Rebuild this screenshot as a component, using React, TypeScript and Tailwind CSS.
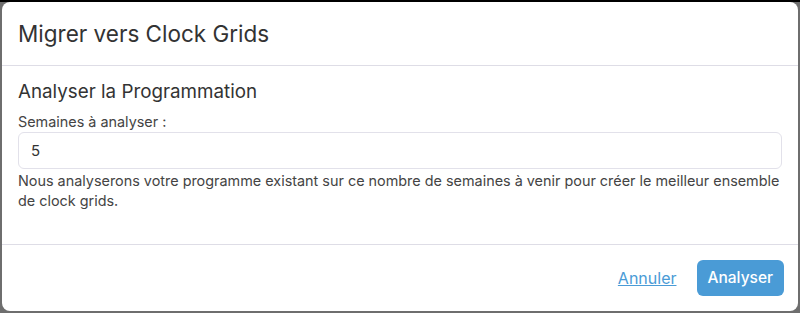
import React, { useState } from "react";

const App: React.FC = () => {
  const [weeks, setWeeks] = useState("5");

  return (
    <div
      className="w-[800px] h-[313px] bg-[#6e6e6e] border-t-2 border-t-black pl-[2px] pr-[2px] pb-[2px] overflow-hidden"
      style={{ fontFamily: "Inter, 'Noto Sans', sans-serif" }}
    >
      <div className="h-full bg-white rounded-lg flex flex-col text-[#333]">
        {/* header */}
        <div className="h-[64px] px-4 flex items-center border-b border-[#dedde6] shrink-0">
          <h5 className="text-[22.5px] leading-[30px] text-[#333]">Migrer vers Clock Grids</h5>
        </div>

        {/* body */}
        <div className="px-4 pt-[14px] flex-1">
          <h6 className="text-[18.8px] leading-[24px] text-[#333] mb-[8px]">Analyser la Programmation</h6>
          <label className="block text-[14.4px] leading-[20px] text-[#444]">Semaines à analyser :</label>
          <input
            type="text"
            value={weeks}
            onChange={(e) => setWeeks(e.target.value)}
            className="block w-full h-[37px] px-3 border border-[#e2e1ea] rounded-md text-[15px] text-[#333] outline-none"
          />
          <p className="text-[14.4px] leading-[20px] text-[#444] mt-[2px]">
            Nous analyserons votre programme existant sur ce nombre de semaines à venir pour créer le meilleur ensemble
            de clock grids.
          </p>
        </div>

        {/* footer */}
        <div className="h-[67px] border-t border-[#dedde6] px-[14px] flex items-center justify-end gap-5 shrink-0">
          <a href="#" className="text-[16px] text-[#4a9bd6] underline">
            Annuler
          </a>
          <button className="h-[36px] px-[11px] rounded-md bg-[#4a9bd6] text-white text-[15.5px] font-medium">
            Analyser
          </button>
        </div>
      </div>
    </div>
  );
};

export default App;
